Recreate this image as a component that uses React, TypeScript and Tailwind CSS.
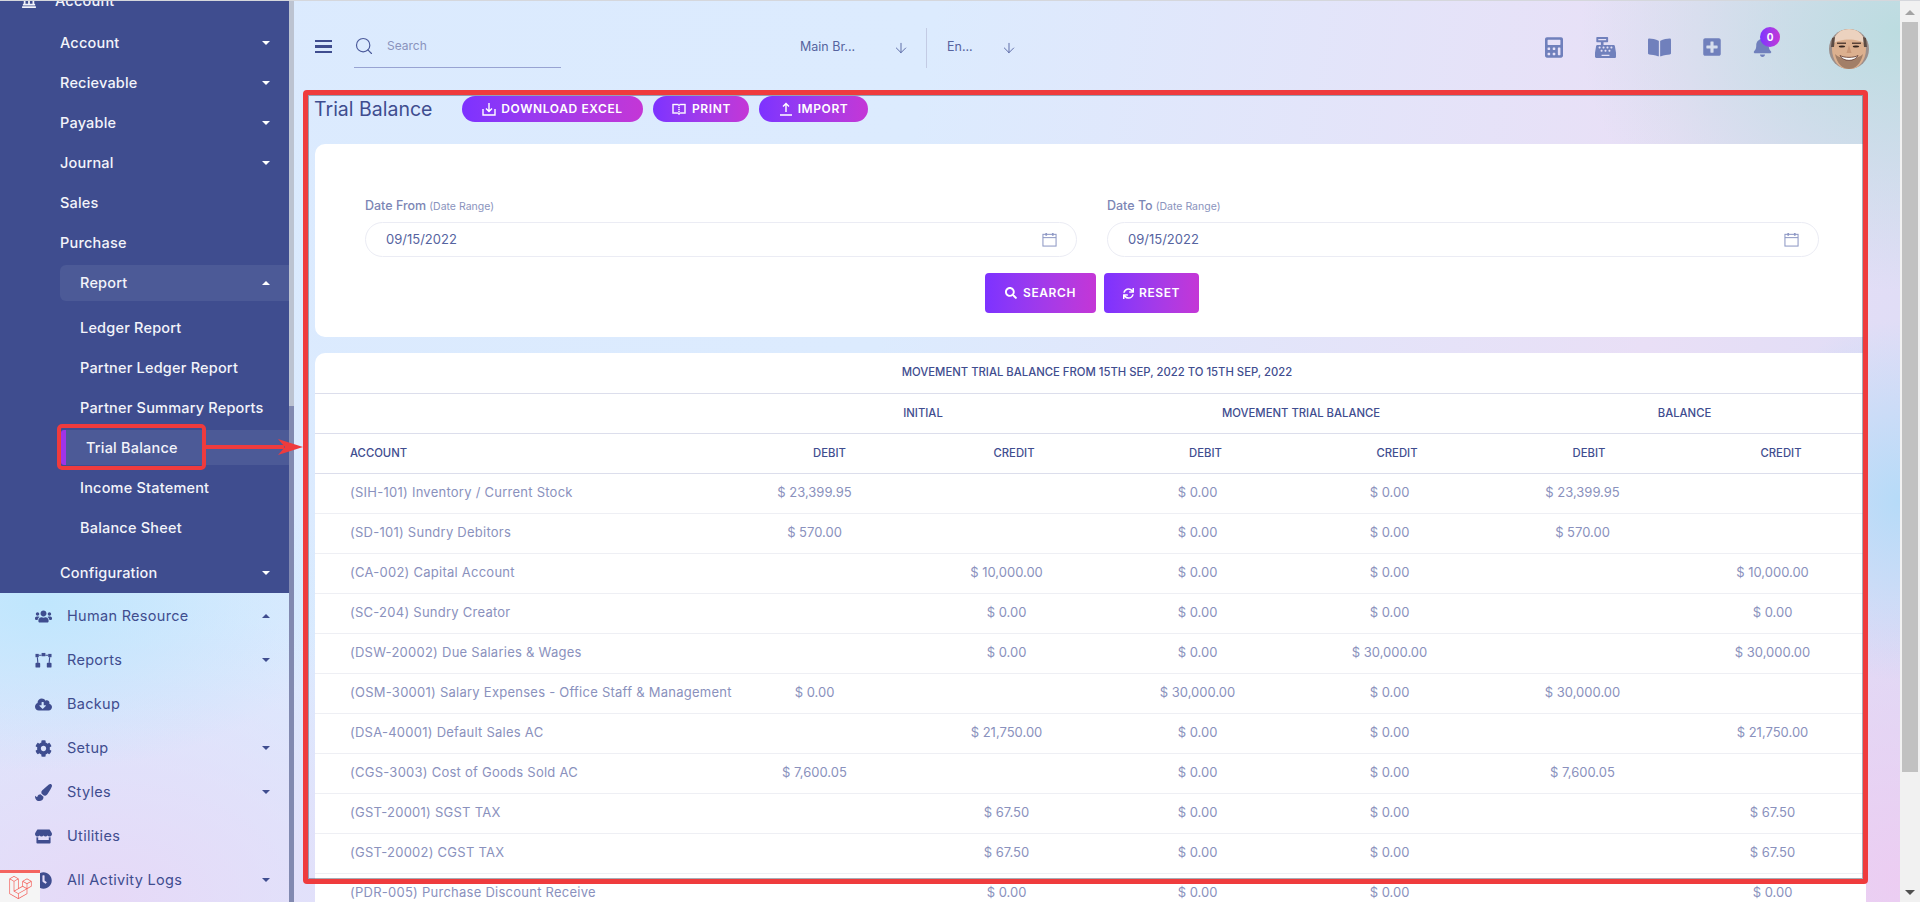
import { ArrowDown, Search } from 'lucide-react'
import {
  FaBell,
  FaBookOpen,
  FaCalculator,
  FaCashRegister,
  FaClock,
  FaCloudDownloadAlt,
  FaCog,
  FaLandmark,
  FaLaravel,
  FaPaintBrush,
  FaPlusSquare,
  FaSearch,
  FaStore,
  FaSync,
  FaUsers,
} from 'react-icons/fa'
import { LiaBookOpenSolid } from 'react-icons/lia'

const Caret = ({ up, dark }: { up?: boolean; dark?: boolean }) => (
  <span
    className={`ml-auto h-0 w-0 border-x-[4px] border-x-transparent ${
      up
        ? dark
          ? 'border-b-[4px] border-b-[#3f4d8f]'
          : 'border-b-[4px] border-b-white'
        : dark
          ? 'border-t-[4px] border-t-[#3f4d8f]'
          : 'border-t-[4px] border-t-white'
    }`}
  />
)

// reports icon: three small nodes on top, two below
const NodesIcon = ({ className }: { className?: string }) => (
  <svg viewBox="0 0 18 16" className={className} fill="currentColor" stroke="currentColor">
    <rect x="0.5" y="1" width="3.5" height="3.5" stroke="none" />
    <rect x="7" y="0" width="4" height="3.5" stroke="none" />
    <rect x="14" y="1" width="3.5" height="3.5" stroke="none" />
    <rect x="0.5" y="10.5" width="5" height="5" rx="1" stroke="none" />
    <rect x="12.5" y="10.5" width="5" height="5" rx="1" stroke="none" />
    <path d="M2.5 4.5L3 10.5M15.5 4.5L15 10.5M4 2.5H7M11 2.5H14" fill="none" strokeWidth="1.2" />
  </svg>
)

const darkRows = [
  { label: 'Account', caret: true },
  { label: 'Recievable', caret: true },
  { label: 'Payable', caret: true },
  { label: 'Journal', caret: true },
  { label: 'Sales' },
  { label: 'Purchase' },
]

const reportRows = ['Ledger Report', 'Partner Ledger Report', 'Partner Summary Reports']

const lightRows = [
  { label: 'Human Resource', icon: FaUsers, caret: 'up' },
  { label: 'Reports', icon: NodesIcon, caret: 'down' },
  { label: 'Backup', icon: FaCloudDownloadAlt },
  { label: 'Setup', icon: FaCog, caret: 'down' },
  { label: 'Styles', icon: FaPaintBrush, caret: 'down' },
  { label: 'Utilities', icon: FaStore },
  { label: 'All Activity Logs', icon: FaClock, caret: 'down' },
]

function Sidebar() {
  return (
    <aside className="flex h-full w-[294px] shrink-0">
      <div className="flex w-[289px] flex-col">
        <div className="h-[594px] overflow-hidden bg-[#3f4d8f] text-[14.5px] font-medium tracking-[0.2px] text-[#f3f4fa]">
          <div className="-mt-[22px] flex h-[44px] items-center gap-[19px] pl-[22px]">
            <FaLandmark className="h-[14px] w-[14px]" />
            <span>Account</span>
          </div>
          {darkRows.map((r) => (
            <div key={r.label} className="flex h-10 items-center pl-[60px] pr-[19px]">
              {r.label}
              {r.caret && <Caret />}
            </div>
          ))}
          <div className="ml-[60px] mt-[2px] flex h-9 items-center rounded-l-[6px] bg-[#4c5a97] pl-5 pr-[19px]">
            Report
            <Caret up />
          </div>
          <div className="mt-[7px]">
            {reportRows.map((r) => (
              <div key={r} className="flex h-10 items-center pl-[80px]">
                {r}
              </div>
            ))}
          </div>
          <div className="ml-[61px] mt-[2px] flex h-[35px] items-center rounded-l-[3px] border-l-[5px] border-l-[#a034e8] bg-[#4c5a97] pl-5">
            Trial Balance
          </div>
          <div className="mt-[3px]">
            <div className="flex h-10 items-center pl-[80px]">Income Statement</div>
            <div className="flex h-10 items-center pl-[80px]">Balance Sheet</div>
          </div>
          <div className="mt-[5px] flex h-10 items-center pl-[60px] pr-[19px]">
            Configuration
            <Caret />
          </div>
        </div>
        <div className="mt-[1px] text-[14.5px] font-normal tracking-[0.3px] text-[#3f4d8f]">
          {lightRows.map((r) => (
            <div key={r.label} className="flex h-[44px] items-center pl-[35px] pr-[19px]">
              <r.icon className="mr-[15px] h-[17px] w-[17px]" />
              {r.label}
              {r.caret && <Caret dark up={r.caret === 'up'} />}
            </div>
          ))}
        </div>
      </div>
      <div className="flex w-[5px] flex-col">
        <div className="h-[405px] bg-[#bcc3d1]" />
        <div className="flex-1 bg-[#8189b0]" />
      </div>
    </aside>
  )
}

function Avatar() {
  return (
    <svg viewBox="0 0 40 40" className="ml-[57px] mt-[4px] h-10 w-10">
      <defs>
        <clipPath id="avatar-clip">
          <circle cx="20" cy="20" r="20" />
        </clipPath>
      </defs>
      <g clipPath="url(#avatar-clip)">
        <rect width="40" height="40" fill="#9b8f8c" />
        <ellipse cx="20" cy="20" rx="17" ry="21" fill="#dcb08f" />
        <path d="M4 15 C5 4 13 0 20 0 C27 0 35 4 36 15 C30 9 10 9 4 15 Z" fill="#ecd2bf" />
        <path d="M3 9 L6 8 L5 18 L2 18 Z M37 9 L34 8 L35 18 L38 18 Z" fill="#5d4c44" />
        <path d="M6 25 C8 35 14 40 20 40 C26 40 32 35 34 25 C29 31 11 31 6 25 Z" fill="#a27f68" />
        <path d="M8 13.5 H17 V15 H8 Z M23 13.5 H32 V15 H23 Z" fill="#5a4338" />
        <ellipse cx="13" cy="17.5" rx="3.2" ry="1.1" fill="#33241e" />
        <ellipse cx="27" cy="17.5" rx="3.2" ry="1.1" fill="#33241e" />
        <path d="M20 16 L17.5 24 L22.5 24 Z" fill="#c99878" />
        <path d="M11 26.5 C15 29 25 29 29 26.5 C26 33 14 33 11 26.5 Z" fill="#fff" stroke="#5a3429" strokeWidth="0.8" />
      </g>
    </svg>
  )
}

function Topbar() {
  const iconClass = 'text-[#7080bc]'
  return (
    <header className="flex h-[89px] shrink-0 items-center pl-[21px] pr-[31px] text-[#3f4d8f]">
      <div className="mr-[22px] mt-[2px] flex w-[17px] flex-col gap-[3px]">
        <span className="h-[2.5px] bg-[#3f4d8f]" />
        <span className="h-[2.5px] bg-[#3f4d8f]" />
        <span className="h-[2.5px] bg-[#3f4d8f]" />
      </div>
      <div className="mt-[7px] h-[38px] w-[207px] border-b border-[#98a3d2] pt-[6px]">
        <div className="flex h-5 items-center gap-[13px]">
          <Search className="h-5 w-5 text-[#4b5a9b]" strokeWidth={1.4} />
          <span className="text-[12px] text-[#8a93bd]">Search</span>
        </div>
      </div>
      <div className="ml-[238px] mt-[4px] flex h-10 items-center text-[12.5px] text-[#56649f]">
        <span className="w-[94px] pl-[1px]">Main Br...</span>
        <ArrowDown className="h-4 w-4 text-[#4b5a9b]" strokeWidth={1.3} />
        <span className="ml-[17px] h-10 border-l border-[#c3cbe4]" />
        <span className="ml-5 w-[54px]">En...</span>
        <ArrowDown className="h-4 w-4 text-[#4b5a9b]" strokeWidth={1.3} />
      </div>
      <div className="ml-auto mt-[3px] flex items-center">
        <FaCalculator className={`h-[21px] w-[18px] ${iconClass}`} />
        <FaCashRegister className={`ml-[32px] h-[21px] w-[21px] ${iconClass}`} />
        <FaBookOpen className={`ml-[32px] h-[21px] w-[23px] ${iconClass}`} />
        <FaPlusSquare className={`ml-[32px] h-[20px] w-[18px] ${iconClass}`} />
        <div className="relative ml-[32px]">
          <FaBell className={`h-[20px] w-[19px] ${iconClass}`} />
          <span className="absolute -right-2 -top-[10px] flex h-5 w-5 items-center justify-center rounded-full bg-gradient-to-r from-[#7d32ff] to-[#c436d6] text-[10px] font-bold text-white">
            0
          </span>
        </div>
        <Avatar />
      </div>
    </header>
  )
}

const DownloadIcon = () => (
  <svg viewBox="0 0 14 14" className="h-[14px] w-[14px]" fill="none" stroke="currentColor" strokeWidth="1.4">
    <path d="M7 1V9.5M4 6.5L7 9.5L10 6.5M1 7V13H13V7" />
  </svg>
)

const UploadIcon = () => (
  <svg viewBox="0 0 14 14" className="h-[14px] w-[14px]" fill="none" stroke="currentColor" strokeWidth="1.4">
    <path d="M7 10V1.5M4 4.5L7 1.5L10 4.5M1 13H13" />
  </svg>
)

const CalendarIcon = () => (
  <svg viewBox="0 0 16 16" className="ml-auto h-[15px] w-[15px] text-[#8e98c4]" fill="none" stroke="currentColor" strokeWidth="1.1">
    <rect x="1" y="2.5" width="14" height="12.5" />
    <path d="M1 6H15" />
    <path d="M4.5 1V4M11.5 1V4" strokeWidth="1.8" />
  </svg>
)

function PillButton({ icon, label, className }: { icon: React.ReactNode; label: string; className: string }) {
  return (
    <button
      type="button"
      className={`flex h-[26px] items-center justify-center gap-[5px] rounded-full bg-gradient-to-r from-[#7d32ff] to-[#c436d6] text-[12px] font-semibold tracking-[0.05em] text-white ${className}`}
    >
      {icon}
      {label}
    </button>
  )
}

function DateField({ label, value }: { label: string; value: string }) {
  return (
    <div>
      <p className="flex h-[18px] items-baseline gap-[3px] text-[12.5px] font-medium text-[#7c86b5]">
        {label}
        <span className="text-[10.5px] font-normal text-[#8a93bd]">(Date Range)</span>
      </p>
      <div className="mt-[7px] flex h-[35px] items-center rounded-full border border-[#ebecf4] pl-[20px] pr-[19px] text-[13px] text-[#56649f]">
        {value}
        <CalendarIcon />
      </div>
    </div>
  )
}

const rows: [string, string, string, string, string, string, string][] = [
  ['(SIH-101) Inventory / Current Stock', '$ 23,399.95', '', '$ 0.00', '$ 0.00', '$ 23,399.95', ''],
  ['(SD-101) Sundry Debitors', '$ 570.00', '', '$ 0.00', '$ 0.00', '$ 570.00', ''],
  ['(CA-002) Capital Account', '', '$ 10,000.00', '$ 0.00', '$ 0.00', '', '$ 10,000.00'],
  ['(SC-204) Sundry Creator', '', '$ 0.00', '$ 0.00', '$ 0.00', '', '$ 0.00'],
  ['(DSW-20002) Due Salaries & Wages', '', '$ 0.00', '$ 0.00', '$ 30,000.00', '', '$ 30,000.00'],
  ['(OSM-30001) Salary Expenses - Office Staff & Management', '$ 0.00', '', '$ 30,000.00', '$ 0.00', '$ 30,000.00', ''],
  ['(DSA-40001) Default Sales AC', '', '$ 21,750.00', '$ 0.00', '$ 0.00', '', '$ 21,750.00'],
  ['(CGS-3003) Cost of Goods Sold AC', '$ 7,600.05', '', '$ 0.00', '$ 0.00', '$ 7,600.05', ''],
  ['(GST-20001) SGST TAX', '', '$ 67.50', '$ 0.00', '$ 0.00', '', '$ 67.50'],
  ['(GST-20002) CGST TAX', '', '$ 67.50', '$ 0.00', '$ 0.00', '', '$ 67.50'],
  ['(PDR-005) Purchase Discount Receive', '', '$ 0.00', '$ 0.00', '$ 0.00', '', '$ 0.00'],
]

function BalanceTable() {
  const th = 'h-10 border-b border-[#dcdeec] text-[11.3px] font-medium uppercase text-[#3f4d8f]'
  return (
    <table className="w-full table-fixed border-collapse">
      <colgroup>
        <col className="w-[403px]" />
        <col className="w-[193px]" />
        <col className="w-[191px]" />
        <col className="w-[191px]" />
        <col className="w-[193px]" />
        <col className="w-[193px]" />
        <col />
      </colgroup>
      <thead>
        <tr>
          <th colSpan={7} className={`${th} pl-[13px] text-center`}>
            Movement Trial Balance From 15th Sep, 2022 To 15th Sep, 2022
          </th>
        </tr>
        <tr>
          <th className={th} />
          <th colSpan={2} className={`${th} pl-[26px] text-center`}>Initial</th>
          <th colSpan={2} className={`${th} pl-[14px] text-center`}>Movement Trial Balance</th>
          <th colSpan={2} className={`${th} pl-[17px] text-center`}>Balance</th>
        </tr>
        <tr>
          <th className={`${th} pl-[35px] text-left`}>Account</th>
          <th className={`${th} pl-[30px] text-center`}>Debit</th>
          <th className={`${th} pl-[15px] text-center`}>Credit</th>
          <th className={`${th} pl-[16px] text-center`}>Debit</th>
          <th className={`${th} pl-[15px] text-center`}>Credit</th>
          <th className={`${th} pl-[13px] text-center`}>Debit</th>
          <th className={`${th} pl-[17px] text-center`}>Credit</th>
        </tr>
      </thead>
      <tbody>
        {rows.map((r) => (
          <tr key={r[0]} className="h-10 border-b border-[#eeeff4] text-[13px] text-[#8a91bd]">
            <td className="whitespace-nowrap pl-[35px] tracking-[0.25px]">{r[0]}</td>
            {r.slice(1).map((v, i) => (
              <td key={i} className="text-center">
                {v}
              </td>
            ))}
          </tr>
        ))}
      </tbody>
    </table>
  )
}

function Annotations() {
  return (
    <>
      <div className="pointer-events-none absolute left-[303px] top-[89px] h-[794px] w-[1565px] rounded-[4px] border-[5px] border-[#ef3b3d] shadow-[inset_0_0_0_1px_rgba(60,70,90,0.45)]" />
      <div className="pointer-events-none absolute left-[57px] top-[423px] h-[46px] w-[149px] rounded-[5px] border-[4px] border-[#ef3b3d]" />
      <svg viewBox="0 0 100 24" className="pointer-events-none absolute left-[204px] top-[434px] h-6 w-[100px]">
        <path d="M0 12H80" stroke="#ef3b3d" strokeWidth="4" />
        <path d="M74 4L99 12L74 20L81 12Z" fill="#ef3b3d" />
      </svg>
      <div className="absolute bottom-0 left-0 flex h-[32px] w-[40px] items-center justify-center border-t-[3px] border-t-[#f4645f] bg-[#f5f5f5]">
        <FaLaravel className="h-[23px] w-[23px] text-[#f4645f]" />
      </div>
    </>
  )
}

export default function App() {
  return (
    <div className="relative flex h-[902px] w-full overflow-hidden border-t border-[#d5d7dc] bg-[radial-gradient(ellipse_320px_260px_at_1900px_30px,#bcdce0,transparent),radial-gradient(ellipse_160px_180px_at_1900px_500px,#b6dbf8,transparent),radial-gradient(ellipse_300px_300px_at_1900px_880px,#eccdf2,transparent),radial-gradient(ellipse_300px_170px_at_40px_600px,#bfe6fd,transparent),radial-gradient(ellipse_460px_300px_at_110px_900px,#e6d9f7,transparent),linear-gradient(100deg,#dbeafe_0%,#dcebfe_45%,#e9dff6_82%,#dcdcf6_100%)] [font-family:Inter,sans-serif]">
      <Sidebar />
      <main className="flex min-w-0 flex-1 flex-col">
        <Topbar />
        <div className="pl-[21px] pr-[34px]">
          <div className="flex h-[54px] items-start pt-[6px]">
            <h1 className="-ml-[1px] mr-[30px] w-[118px] whitespace-nowrap text-[19.5px] font-normal leading-[26px] text-[#3f4d8f]">Trial Balance</h1>
            <div className="flex gap-[10px]">
              <PillButton className="w-[181px]" icon={<DownloadIcon />} label="DOWNLOAD EXCEL" />
              <PillButton className="w-[96px]" icon={<LiaBookOpenSolid className="h-4 w-4" stroke="currentColor" strokeWidth={0.8} />} label="PRINT" />
              <PillButton className="w-[109px]" icon={<UploadIcon />} label="IMPORT" />
            </div>
          </div>
          <section className="h-[193px] rounded-l-[10px] bg-white pl-[50px] pr-[47px] pt-[53px]">
            <div className="grid grid-cols-2 gap-[30px]">
              <DateField label="Date From" value="09/15/2022" />
              <DateField label="Date To" value="09/15/2022" />
            </div>
            <div className="mt-4 flex justify-center gap-2">
              <button type="button" className="flex h-10 w-[111px] items-center justify-center gap-[6px] rounded-[4px] bg-gradient-to-r from-[#7d32ff] to-[#c436d6] text-[12px] font-semibold tracking-[0.05em] text-white">
                <FaSearch className="h-[12px] w-[12px]" />
                SEARCH
              </button>
              <button type="button" className="flex h-10 w-[95px] items-center justify-center gap-[5px] rounded-[4px] bg-gradient-to-r from-[#7d32ff] to-[#c436d6] text-[12px] font-semibold tracking-[0.05em] text-white">
                <FaSync className="h-[11px] w-[11px]" />
                RESET
              </button>
            </div>
          </section>
          <section className="mt-4 rounded-tl-[10px] bg-white">
            <BalanceTable />
          </section>
        </div>
      </main>
      <div className="relative flex w-5 shrink-0 flex-col items-center bg-[#f1f1f1]">
        <span className="mt-[9px] h-0 w-0 border-x-[5px] border-b-[5px] border-x-transparent border-b-[#a3a3a3]" />
        <div className="mt-[7px] h-[750px] w-4 bg-[#c1c1c1]" />
        <span className="absolute bottom-[7px] h-0 w-0 border-x-[5px] border-t-[5px] border-x-transparent border-t-[#505050]" />
      </div>
      <Annotations />
    </div>
  )
}
